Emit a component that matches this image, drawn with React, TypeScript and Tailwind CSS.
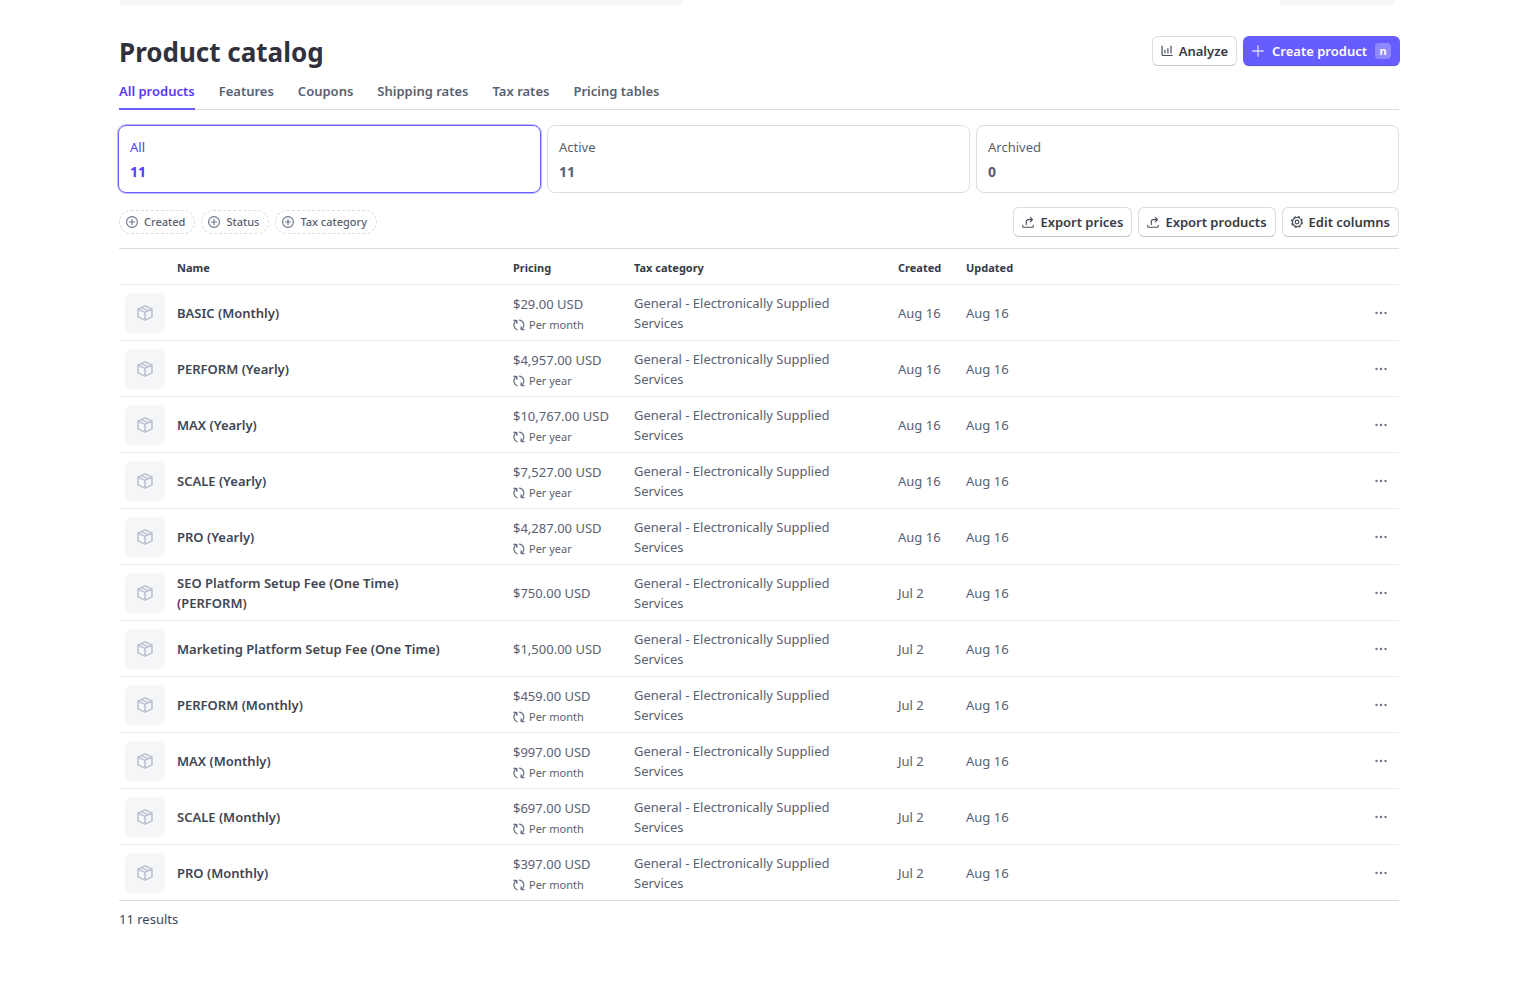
import React from "react";

type Product = {
  name: string;
  price: string;
  interval?: string;
  created: string;
};

const products: Product[] = [
  { name: "BASIC (Monthly)", price: "$29.00 USD", interval: "Per month", created: "Aug 16" },
  { name: "PERFORM (Yearly)", price: "$4,957.00 USD", interval: "Per year", created: "Aug 16" },
  { name: "MAX (Yearly)", price: "$10,767.00 USD", interval: "Per year", created: "Aug 16" },
  { name: "SCALE (Yearly)", price: "$7,527.00 USD", interval: "Per year", created: "Aug 16" },
  { name: "PRO (Yearly)", price: "$4,287.00 USD", interval: "Per year", created: "Aug 16" },
  { name: "SEO Platform Setup Fee (One Time) (PERFORM)", price: "$750.00 USD", created: "Jul 2" },
  { name: "Marketing Platform Setup Fee (One Time)", price: "$1,500.00 USD", created: "Jul 2" },
  { name: "PERFORM (Monthly)", price: "$459.00 USD", interval: "Per month", created: "Jul 2" },
  { name: "MAX (Monthly)", price: "$997.00 USD", interval: "Per month", created: "Jul 2" },
  { name: "SCALE (Monthly)", price: "$697.00 USD", interval: "Per month", created: "Jul 2" },
  { name: "PRO (Monthly)", price: "$397.00 USD", interval: "Per month", created: "Jul 2" },
];

const tabs = ["All products", "Features", "Coupons", "Shipping rates", "Tax rates", "Pricing tables"];

const summaries = [
  { label: "All", count: 11 },
  { label: "Active", count: 11 },
  { label: "Archived", count: 0 },
];

function BoxIcon() {
  return (
    <svg className="size-4" viewBox="0 0 16 16" fill="none" stroke="#b6c0cd" strokeWidth="1.5" strokeLinejoin="round" aria-hidden="true">
      <path d="M8 .9l7 3.2v7.8l-7 3.2-7-3.2V4.1z" />
      <path d="M1.2 4.3L8 7.4l6.8-3.1M8 7.4v7.4M4.6 2.6l6.6 3.2" />
    </svg>
  );
}

function ChartIcon() {
  return (
    <svg className="size-3" viewBox="0 0 12 12" fill="none" stroke="#474e5a" strokeWidth="1.2" strokeLinecap="round" aria-hidden="true">
      <path d="M1.1 1v8.6c0 .5.4.9.9.9h9.2" />
      <path d="M3.9 5v3M6.9 3.5V8M10 1.2V8" />
    </svg>
  );
}

function PlusIcon() {
  return (
    <svg className="size-3" viewBox="0 0 12 12" fill="none" stroke="#d9d7ff" strokeWidth="1.3" strokeLinecap="round" aria-hidden="true">
      <path d="M6 .7v10.6M.7 6h10.6" />
    </svg>
  );
}

function CirclePlusIcon() {
  return (
    <svg className="size-3" viewBox="0 0 12 12" fill="none" stroke="#687385" strokeWidth="1.1" strokeLinecap="round" aria-hidden="true">
      <circle cx="6" cy="6" r="5.4" />
      <path d="M6 3.3v5.4M3.3 6h5.4" />
    </svg>
  );
}

function ExportIcon() {
  return (
    <svg className="size-3" viewBox="0 0 12 12" fill="none" stroke="#474e5a" strokeWidth="1.1" strokeLinecap="round" strokeLinejoin="round" aria-hidden="true">
      <path d="M.7 9.2v1.1c0 .6.4 1 1 1h8.6c.6 0 1-.4 1-1V9.2" />
      <path d="M4.3 8.4V5.6c0-1.2.8-2 2-2h4M8.3 1.4l2.2 2.2-2.2 2.2" />
    </svg>
  );
}

function GearIcon() {
  return (
    <svg className="size-3" viewBox="0 0 12 12" fill="none" stroke="#474e5a" aria-hidden="true">
      <circle cx="6" cy="6" r="5.3" strokeWidth="1.3" strokeDasharray="2.5 1.66" />
      <circle cx="6" cy="6" r="4.5" strokeWidth="1.1" />
      <circle cx="6" cy="6" r="1.8" strokeWidth="1.2" />
    </svg>
  );
}

function RecurIcon() {
  return (
    <svg className="size-3" viewBox="0 0 12 12" fill="none" stroke="#687385" strokeWidth="1.2" strokeLinecap="round" strokeLinejoin="round" aria-hidden="true">
      <path d="M4.2 10.8A5 5 0 0 1 3.4 1.8M.9 1.4h3v3" />
      <path d="M6.6 1.1a5 5 0 0 1 2 9.1M11.1 10.6h-3v-3" />
    </svg>
  );
}

function DotsIcon() {
  return (
    <svg className="size-3" viewBox="0 0 12 12" fill="#687385" aria-hidden="true">
      <circle cx="1.5" cy="6" r="1.2" />
      <circle cx="6" cy="6" r="1.2" />
      <circle cx="10.5" cy="6" r="1.2" />
    </svg>
  );
}

function SecondaryButton({ icon, children }: { icon: React.ReactNode; children: React.ReactNode }) {
  return (
    <button
      type="button"
      className="flex h-[30px] items-center gap-[6px] rounded-md border border-[#d8dee4] border-b-[#c0c8d2] bg-white px-2 text-[13px] font-semibold whitespace-nowrap text-[#353a44]"
    >
      {icon}
      {children}
    </button>
  );
}

export default function App() {
  return (
    <div className="bg-white pr-2 font-['Noto_Sans',sans-serif] text-[13px] leading-5 text-[#596171]">
      <div className="mx-auto max-w-[1280px]">
        <div className="flex h-[5px] justify-between">
          <div className="w-[564px] rounded-b-md bg-[#f5f6f8]" />
          <div className="mr-1 w-[116px] rounded-b-full bg-[#f5f6f8]" />
        </div>

        <header className="mt-[31px] -mr-px flex items-start justify-between">
          <h1 className="text-[26px] leading-8 font-bold text-[#30313d]">Product catalog</h1>
          <div className="flex gap-[6px]">
            <SecondaryButton icon={<ChartIcon />}>Analyze</SecondaryButton>
            <button
              type="button"
              className="flex h-[30px] items-center gap-2 rounded-md border border-[#675dff] border-b-[#5851df] bg-[#675dff] px-2 text-[13px] font-semibold whitespace-nowrap text-white shadow-xs"
            >
              <PlusIcon />
              Create product
              <kbd className="flex size-4 items-center justify-center rounded-sm bg-[#8f88ff] font-['Noto_Sans',sans-serif] text-[11px] font-bold">n</kbd>
            </button>
          </div>
        </header>

        <nav className="mt-[9px] flex gap-6 border-b border-[#d8dee4]">
          {tabs.map((tab, i) => (
            <a
              key={tab}
              href="#"
              className={
                i === 0
                  ? "-mb-px border-b-2 border-[#675dff] pt-1 pb-[7px] font-semibold text-[#533afd]"
                  : "pt-1 pb-[7px] font-semibold text-[#596171]"
              }
            >
              {tab}
            </a>
          ))}
        </nav>

        <div className="mt-[15px] -ml-px grid grid-cols-3 gap-[6px]">
          {summaries.map((item, i) => (
            <button
              key={item.label}
              type="button"
              className={
                i === 0
                  ? "flex h-[68px] flex-col rounded-lg border border-[#675dff] px-[11px] pt-[11px] text-left text-[#533afd] ring-1 ring-[#675dff]/40"
                  : "flex h-[68px] flex-col rounded-lg border border-[#d8dee4] px-[11px] pt-[11px] text-left text-[#596171]"
              }
            >
              <span>{item.label}</span>
              <span className="mt-[5px] text-[14px] font-bold">{item.count}</span>
            </button>
          ))}
        </div>

        <div className="mt-[14px] flex items-center justify-between">
          <div className="flex gap-[6px]">
            {["Created", "Status", "Tax category"].map((filter) => (
              <button
                key={filter}
                type="button"
                className="flex h-6 items-center gap-[6px] rounded-full border border-dashed border-[#d8dee4] pr-[9px] pl-[6px] text-[11px] font-medium whitespace-nowrap text-[#596171]"
              >
                <CirclePlusIcon />
                {filter}
              </button>
            ))}
          </div>
          <div className="flex gap-[6px]">
            <SecondaryButton icon={<ExportIcon />}>Export prices</SecondaryButton>
            <SecondaryButton icon={<ExportIcon />}>Export products</SecondaryButton>
            <SecondaryButton icon={<GearIcon />}>Edit columns</SecondaryButton>
          </div>
        </div>

        <table className="mt-[11px] w-full table-fixed border-collapse border-y border-[#d8dee4] text-left">
          <colgroup>
            <col className="w-[52px]" />
            <col className="w-[336px]" />
            <col className="w-[121px]" />
            <col className="w-[264px]" />
            <col className="w-[68px]" />
            <col className="w-[68px]" />
            <col />
          </colgroup>
          <thead>
            <tr className="h-9 border-b border-[#ebeef1] text-[11px] text-[#353a44]">
              <th className="p-0" aria-label="Image" />
              <th className="px-[6px] pt-[2px] pb-0 font-bold">Name</th>
              <th className="px-[6px] pt-[2px] pb-0 font-bold">Pricing</th>
              <th className="px-[6px] pt-[2px] pb-0 font-bold">Tax category</th>
              <th className="px-[6px] pt-[2px] pb-0 font-bold">Created</th>
              <th className="px-[6px] pt-[2px] pb-0 font-bold">Updated</th>
              <th className="p-0" aria-label="Actions" />
            </tr>
          </thead>
          <tbody>
            {products.map((product) => (
              <tr key={product.name} className="h-14 border-b border-[#ebeef1] last:border-[#d8dee4]">
                <td className="py-0 pr-0 pl-[6px]">
                  <div className="flex size-10 items-center justify-center rounded-md bg-[#f5f6f8]">
                    <BoxIcon />
                  </div>
                </td>
                <td className="px-[6px] py-0 font-semibold text-[#414552]">
                  <div className="max-w-[280px]">{product.name}</div>
                </td>
                <td className="px-[6px] py-0 whitespace-nowrap">
                  {product.interval ? (
                    <div className="pt-[3px]">
                      <div>{product.price}</div>
                      <div className="mt-px flex items-center gap-1 text-[11px]">
                        <RecurIcon />
                        {product.interval}
                      </div>
                    </div>
                  ) : (
                    product.price
                  )}
                </td>
                <td className="px-[6px] py-0">
                  <div className="max-w-[220px]">General - Electronically Supplied Services</div>
                </td>
                <td className="px-[6px] py-0 whitespace-nowrap">{product.created}</td>
                <td className="px-[6px] py-0 whitespace-nowrap">Aug 16</td>
                <td className="py-0 pr-3 pl-0">
                  <button type="button" aria-label="More options" className="ml-auto flex h-6 items-center">
                    <DotsIcon />
                  </button>
                </td>
              </tr>
            ))}
          </tbody>
        </table>

        <p className="mt-2 text-[#414552]">11 results</p>
      </div>
    </div>
  );
}
